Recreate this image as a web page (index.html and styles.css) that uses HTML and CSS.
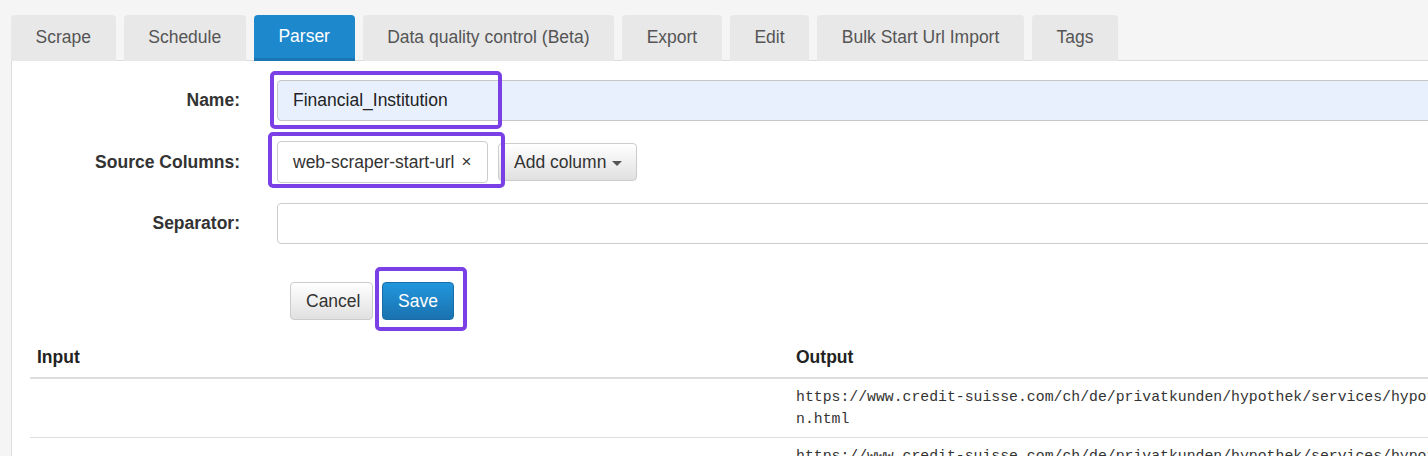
FILE: index.html
```html
<!DOCTYPE html>
<html lang="en">
<head>
<meta charset="utf-8">
<title>Parser</title>
<link rel="stylesheet" href="styles.css">
</head>
<body>
<div class="page">
  <ul class="tabs">
    <li class="tab">Scrape</li>
    <li class="tab">Schedule</li>
    <li class="tab active">Parser</li>
    <li class="tab">Data quality control (Beta)</li>
    <li class="tab">Export</li>
    <li class="tab">Edit</li>
    <li class="tab">Bulk Start Url Import</li>
    <li class="tab">Tags</li>
  </ul>
  <div class="panel">
    <form class="form">
      <label class="label">Name:</label>
      <div class="field">
        <div class="input autofill">Financial_Institution</div>
        <span class="mark mark-name"></span>
      </div>

      <label class="label">Source Columns:</label>
      <div class="field tags-row">
        <div class="tagbox">web-scraper-start-url <span class="x">×</span></div>
        <button type="button" class="btn btn-default btn-add">Add column <span class="caret"></span></button>
        <span class="mark mark-source"></span>
      </div>

      <label class="label">Separator:</label>
      <div class="field">
        <div class="input"></div>
      </div>

      <span></span>
      <div class="field actions">
        <button type="button" class="btn btn-default">Cancel</button>
        <span class="save-wrap">
          <button type="button" class="btn btn-primary">Save</button>
          <span class="mark mark-save"></span>
        </span>
      </div>
    </form>

    <table class="results">
      <colgroup><col class="c-in"><col class="c-out"></colgroup>
      <thead>
        <tr><th>Input</th><th>Output</th></tr>
      </thead>
      <tbody>
        <tr><td></td><td><div class="mono">https://www.credit-suisse.com/ch/de/privatkunden/hypothek/services/hypothekenrechner/tragbarkeitsrechner-hypothek-berechnen.html</div></td></tr>
        <tr><td></td><td><div class="mono">https://www.credit-suisse.com/ch/de/privatkunden/hypothek/services/hypothekenrechner/tragbarkeitsrechner-hypothek-berechnen.html</div></td></tr>
      </tbody>
    </table>
  </div>
</div>
</body>
</html>
```
FILE: styles.css
```css
html, body {
  margin: 0;
  padding: 0;
  width: 1428px;
  height: 456px;
  overflow: hidden;
}
body {
  background: #f5f5f5;
  font-family: "Liberation Sans", Arial, sans-serif;
  font-size: 17.5px;
  color: #333;
}
.page {
  padding-top: 15px;
  width: 1900px;
}
.tabs {
  list-style: none;
  margin: 0 0 0 11px;
  padding: 0;
  display: flex;
  gap: 8px;
  border-bottom: 1px solid #dcdcdc;
  height: 45px;
}
.tab {
  height: 46px;
  padding: 0 24.6px 2px;
  display: flex;
  align-items: center;
  background: #e8e8e8;
  color: #555;
  border-radius: 4px 4px 0 0;
  box-sizing: border-box;
  line-height: 25px;
  white-space: nowrap;
}
.tab.active {
  background: #1e88cd;
  color: #fff;
  border-bottom: 3px solid #1a76b4;
  padding-bottom: 0;
}
.panel {
  margin-left: 11px;
  background: #fff;
  border-left: 1px solid #ddd;
  padding-top: 19px;
  height: 420px;
}
.form {
  display: grid;
  grid-template-columns: 228px 1200px;
  column-gap: 37px;
  row-gap: 20px;
  margin: 0;
}
.label {
  font-weight: bold;
  text-align: right;
  color: #333;
  align-self: center;
}
.field {
  position: relative;
  display: flex;
  align-items: center;
}
.input {
  box-sizing: border-box;
  width: 100%;
  height: 41px;
  border: 1px solid #ccc;
  border-radius: 4px;
  background: #fff;
  padding: 0 15px;
  display: flex;
  align-items: center;
  color: #222;
}
.input.autofill {
  background: #e8f0fe;
  border-color: #c6c6c6;
}
.tags-row {
  gap: 10px;
}
.tagbox {
  box-sizing: border-box;
  width: 211px;
  height: 42px;
  border: 1px solid #ccc;
  border-radius: 4px;
  background: #fff;
  padding: 0 15px;
  display: flex;
  align-items: center;
  color: #333;
  white-space: nowrap;
}
.x {
  margin-left: 7px;
  font-size: 17px;
  color: #333;
}
.btn {
  box-sizing: border-box;
  height: 38px;
  font-family: "Liberation Sans", Arial, sans-serif;
  font-size: 17.5px;
  border-radius: 4px;
  padding: 0 15px;
  display: inline-flex;
  align-items: center;
  white-space: nowrap;
  cursor: pointer;
}
.btn-default {
  background: linear-gradient(#ffffff, #e0e0e0);
  border: 1px solid #ccc;
  color: #333;
}
.btn-add {
  width: 139px;
  padding: 0 15px;
}
.btn-primary {
  background: linear-gradient(#2296dc, #1a72b0);
  border: 1px solid #1a6ea8;
  color: #fff;
}
.caret {
  display: inline-block;
  width: 0;
  height: 0;
  margin-left: 6px;
  margin-top: 2px;
  border-top: 5px solid #555;
  border-left: 5px solid transparent;
  border-right: 5px solid transparent;
}
.actions {
  padding-left: 13px;
  gap: 9px;
  margin-top: 18px;
}
.actions .btn-default { width: 83px; }
.actions .btn-primary { width: 72px; justify-content: center; }
.save-wrap {
  position: relative;
  display: inline-flex;
}
.mark {
  position: absolute;
  box-sizing: border-box;
  border: 4px solid #7b3fe6;
  border-radius: 5px;
  pointer-events: none;
}
.mark-name {
  left: -7px;
  top: -9px;
  width: 232px;
  height: 58px;
}
.mark-source {
  left: -9px;
  top: -9px;
  width: 237px;
  height: 56px;
}
.mark-save {
  left: -7px;
  top: -15px;
  width: 92px;
  height: 64px;
}
.results {
  margin: 19px 0 0 18px;
  border-collapse: collapse;
  table-layout: fixed;
  width: 1800px;
}
.c-in { width: 759px; }
.c-out { width: 1041px; }
.results th {
  text-align: left;
  font-weight: bold;
  color: #222;
  line-height: 22px;
  padding: 7px 7px 9px;
  border-bottom: 2px solid #ddd;
}
.results td {
  padding: 7px;
  line-height: 22px;
  border-bottom: 1px solid #ddd;
  vertical-align: top;
}
.mono {
  font-family: "Liberation Mono", "DejaVu Sans Mono", monospace;
  font-size: 14.8px;
  color: #333;
  width: 122ch;
  word-break: break-all;
}
```
